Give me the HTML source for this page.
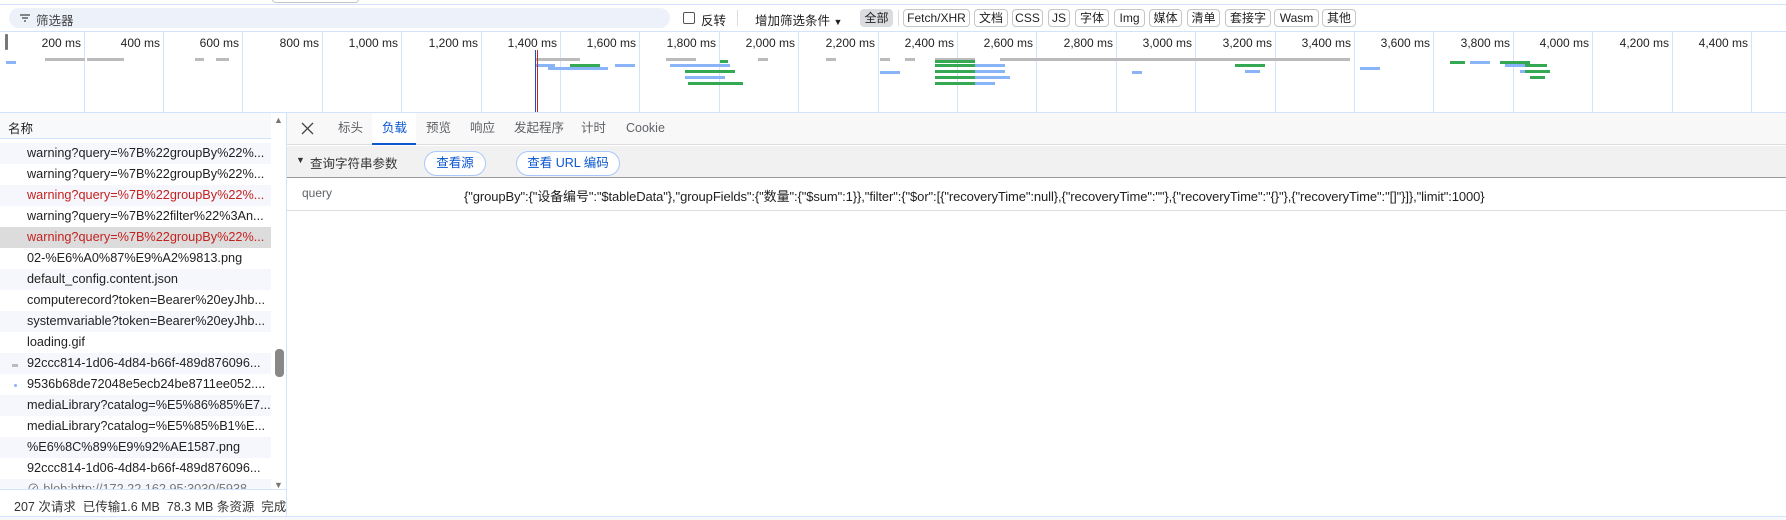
<!DOCTYPE html>
<html><head><meta charset="utf-8"><style>
*{margin:0;padding:0;box-sizing:border-box}
body{width:1786px;height:520px;overflow:hidden;background:#fff;font-family:"Liberation Sans","Noto Sans CJK SC",sans-serif;font-size:12px;color:#1f1f1f;position:relative}
.a{position:absolute}
.chip{position:absolute;top:9px;height:18px;border:1px solid #c4c7c5;border-radius:4px;font-size:12px;line-height:16px;text-align:center;color:#1f1f1f;background:#fff}
.tick{position:absolute;top:32px;height:80px;width:1px;background:#d3e3fd}
.lbl{position:absolute;top:36px;font-size:12px;color:#1f1f1f;text-align:right;width:70px}
.row{position:absolute;left:0;width:271px;height:21px;line-height:21px;padding-left:27px;font-size:12.7px;white-space:nowrap;overflow:hidden}
.row.o{background:#f5f7fc}
.red{color:#c5221f}
.tab{position:absolute;top:112px;height:33px;line-height:32px;font-size:12.5px;color:#5f6368}
.b{position:absolute;height:3px}
</style></head><body>
<div class="a" style="left:0;top:4px;width:1786px;height:1px;background:#d3e3fd"></div>
<div class="a" style="left:272px;top:-4px;width:87px;height:7px;border:1px solid #c4c7c5;border-radius:4px;background:#fff"></div>
<div class="a" style="left:9px;top:8px;width:661px;height:20px;border-radius:10px;background:#edf2fa"></div>
<svg class="a" style="left:19px;top:13px" width="12" height="10"><path d="M1 2h10M3 5h6M5 8h2" stroke="#444" stroke-width="1.3"/></svg>
<div class="a" style="left:36px;top:10px;font-size:12.5px;color:#444">筛选器</div>
<div class="a" style="left:683px;top:12px;width:12px;height:12px;border:1px solid #555;border-radius:2px"></div>
<div class="a" style="left:701px;top:10px;font-size:12.5px">反转</div>
<div class="a" style="left:737px;top:10px;width:1px;height:16px;background:#ddd"></div>
<div class="a" style="left:755px;top:10px;font-size:12.5px">增加筛选条件 <span style="font-size:9px">▼</span></div>
<div class="chip" style="left:860px;width:33px;background:#dadce0;border-color:#dadce0">全部</div>
<div class="a" style="left:898px;top:10px;width:1px;height:16px;background:#ddd"></div>
<div class="chip" style="left:903px;width:67px">Fetch/XHR</div>
<div class="chip" style="left:974px;width:34px">文档</div>
<div class="chip" style="left:1012px;width:31px">CSS</div>
<div class="chip" style="left:1048px;width:22px">JS</div>
<div class="chip" style="left:1075px;width:34px">字体</div>
<div class="chip" style="left:1114px;width:31px">Img</div>
<div class="chip" style="left:1149px;width:33px">媒体</div>
<div class="chip" style="left:1187px;width:33px">清单</div>
<div class="chip" style="left:1225px;width:46px">套接字</div>
<div class="chip" style="left:1274px;width:45px">Wasm</div>
<div class="chip" style="left:1322px;width:34px">其他</div>
<div class="a" style="left:0;top:31px;width:1786px;height:1px;background:#d3e3fd"></div>
<div class="a" style="left:5px;top:34px;width:3px;height:16px;background:#777;border-radius:1px"></div>
<div id="tl"></div>
<div class="a" style="left:535px;top:50px;width:1px;height:62px;background:#1a4fd8"></div>
<div class="a" style="left:537px;top:50px;width:1px;height:62px;background:#d02020"></div>
<div class="a" style="left:0;top:112px;width:1786px;height:1px;background:#d3e3fd"></div>
<div class="a" style="left:0;top:113px;width:286px;height:404px;background:#fff"></div>
<div class="a" style="left:0;top:113px;width:271px;height:26px;background:#f8f9fb;border-bottom:1px solid #d3e3fd"></div>
<div class="a" style="left:8px;top:118px;font-size:12.5px">名称</div>
<div class="a" style="left:274px;top:115px;font-size:9px;color:#777">▲</div>
<div class="a" style="left:274px;top:480px;font-size:9px;color:#777">▼</div>
<div class="a" style="left:275px;top:349px;width:9px;height:28px;border-radius:4px;background:#888"></div>
<div class="a" style="left:286px;top:113px;width:1px;height:404px;background:#d3e3fd"></div>
<div class="row o" style="top:143px">warning?query=%7B%22groupBy%22%...</div>
<div class="row" style="top:164px">warning?query=%7B%22groupBy%22%...</div>
<div class="row o red" style="top:185px">warning?query=%7B%22groupBy%22%...</div>
<div class="row" style="top:206px">warning?query=%7B%22filter%22%3An...</div>
<div class="row red" style="top:227px;background:#dcdcdc">warning?query=%7B%22groupBy%22%...</div>
<div class="row" style="top:248px">02-%E6%A0%87%E9%A2%9813.png</div>
<div class="row o" style="top:269px">default_config.content.json</div>
<div class="row" style="top:290px">computerecord?token=Bearer%20eyJhb...</div>
<div class="row o" style="top:311px">systemvariable?token=Bearer%20eyJhb...</div>
<div class="row" style="top:332px">loading.gif</div>
<div class="row o" style="top:353px">92ccc814-1d06-4d84-b66f-489d876096...</div>
<div class="row" style="top:374px">9536b68de72048e5ecb24be8711ee052....</div>
<div class="row o" style="top:395px">mediaLibrary?catalog=%E5%86%85%E7...</div>
<div class="row" style="top:416px">mediaLibrary?catalog=%E5%85%B1%E...</div>
<div class="row o" style="top:437px">%E6%8C%89%E9%92%AE1587.png</div>
<div class="row" style="top:458px">92ccc814-1d06-4d84-b66f-489d876096...</div>
<div class="row o" style="top:479px;height:10px;line-height:21px;color:#777">⊘ blob:http://172.22.162.95:3030/5938...</div>
<div class="a" style="left:12px;top:364px;width:6px;height:3px;background:#bbb"></div>
<div class="a" style="left:14px;top:384px;width:3px;height:3px;background:#8ab4f8;border-radius:2px"></div>
<div class="a" style="left:0;top:489px;width:286px;height:1px;background:#d3e3fd"></div>
<div class="a" style="left:14px;top:496px;font-size:12.5px;color:#333;white-space:nowrap;width:272px;overflow:hidden">207 次请求 &nbsp;已传输1.6 MB &nbsp;78.3 MB 条资源 &nbsp;完成</div>
<div class="a" style="left:287px;top:113px;width:1499px;height:32px;background:#f8f8f8;border-bottom:1px solid #ddd"></div>
<svg class="a" style="left:301px;top:122px" width="13" height="13"><path d="M1 1L12 12M12 1L1 12" stroke="#444" stroke-width="1.3"/></svg>
<div class="tab" style="left:338px">标头</div>
<div class="a" style="left:372px;top:113px;width:44px;height:32px;background:#fff;border-bottom:2px solid #0b57d0"></div>
<div class="tab" style="left:382px;color:#0b57d0">负载</div>
<div class="tab" style="left:426px">预览</div>
<div class="tab" style="left:470px">响应</div>
<div class="tab" style="left:514px">发起程序</div>
<div class="tab" style="left:581px">计时</div>
<div class="tab" style="left:626px">Cookie</div>
<div class="a" style="left:287px;top:146px;width:1499px;height:32px;background:#f1f1f1;border-bottom:1px solid #999"></div>
<div class="a" style="left:296px;top:155px;font-size:9px;color:#333">▼</div>
<div class="a" style="left:310px;top:153px;font-size:12.5px;color:#333">查询字符串参数</div>
<div class="a" style="left:424px;top:151px;width:62px;height:25px;border:1px solid #a8c7fa;border-radius:13px;text-align:center;line-height:23px;font-size:12.5px;color:#0b57d0;background:#fff">查看源</div>
<div class="a" style="left:516px;top:151px;width:104px;height:25px;border:1px solid #a8c7fa;border-radius:13px;text-align:center;line-height:23px;font-size:12.5px;color:#0b57d0;background:#fff">查看 URL 编码</div>
<div class="a" style="left:287px;top:210px;width:1499px;height:1px;background:#ddd"></div>
<div class="a" style="left:302px;top:186px;font-size:12px;color:#5f6368">query</div>
<div class="a" style="left:464px;top:186px;font-size:13px;white-space:nowrap;letter-spacing:-0.1px">{"groupBy":{"设备编号":"$tableData"},"groupFields":{"数量":{"$sum":1}},"filter":{"$or":[{"recoveryTime":null},{"recoveryTime":""},{"recoveryTime":"{}"},{"recoveryTime":"[]"}]},"limit":1000}</div>
<div class="a" style="left:0;top:516px;width:1786px;height:1px;background:#d3e3fd"></div>
<div class="a" style="left:0;top:517px;width:1786px;height:3px;background:#f8f9fb"></div>
<script>
var h='',labels=['200','400','600','800','1,000','1,200','1,400','1,600','1,800','2,000','2,200','2,400','2,600','2,800','3,000','3,200','3,400','3,600','3,800','4,000','4,200','4,400'];
for(var i=0;i<labels.length;i++){var x=Math.round(83.5+i*79.4);h+='<div class="tick" style="left:'+x+'px"></div><div class="lbl" style="left:'+(x-73)+'px">'+labels[i]+' ms</div>';}
var bars=[[6,61,10,'#8ab4f8'],[45,58,40,'#bbb'],[87,58,37,'#bbb'],[195,58,9,'#bbb'],[216,58,13,'#bbb'],[535,58,45,'#bbb'],[535,64,20,'#8ab4f8'],[548,67,60,'#8ab4f8'],[570,64,30,'#34a853'],[615,64,20,'#8ab4f8'],[666,58,30,'#bbb'],[670,64,60,'#8ab4f8'],[685,70,50,'#34a853'],[685,76,40,'#8ab4f8'],[688,82,55,'#34a853'],[720,60,8,'#34a853'],[758,58,10,'#bbb'],[826,58,10,'#bbb'],[880,58,10,'#bbb'],[905,58,10,'#bbb'],[880,71,20,'#8ab4f8'],[935,58,40,'#bbb'],[935,60,40,'#34a853'],[935,64,40,'#34a853'],[935,70,40,'#34a853'],[935,76,40,'#34a853'],[935,82,40,'#34a853'],[975,64,30,'#8ab4f8'],[975,70,30,'#8ab4f8'],[975,76,35,'#8ab4f8'],[975,82,20,'#8ab4f8'],[1000,58,230,'#bbb'],[1230,58,120,'#bbb'],[1132,71,10,'#8ab4f8'],[1235,64,30,'#34a853'],[1245,70,15,'#8ab4f8'],[1360,67,20,'#8ab4f8'],[1450,61,15,'#34a853'],[1470,61,20,'#8ab4f8'],[1500,61,20,'#34a853'],[1505,64,25,'#8ab4f8'],[1520,70,25,'#8ab4f8'],[1520,61,10,'#34a853'],[1525,64,22,'#34a853'],[1525,70,25,'#34a853'],[1530,76,15,'#34a853']];
for(var j=0;j<bars.length;j++){var b=bars[j];h+='<div class="b" style="left:'+b[0]+'px;top:'+b[1]+'px;width:'+b[2]+'px;background:'+b[3]+'"></div>';}
document.getElementById('tl').innerHTML=h;
</script>
</body></html>
